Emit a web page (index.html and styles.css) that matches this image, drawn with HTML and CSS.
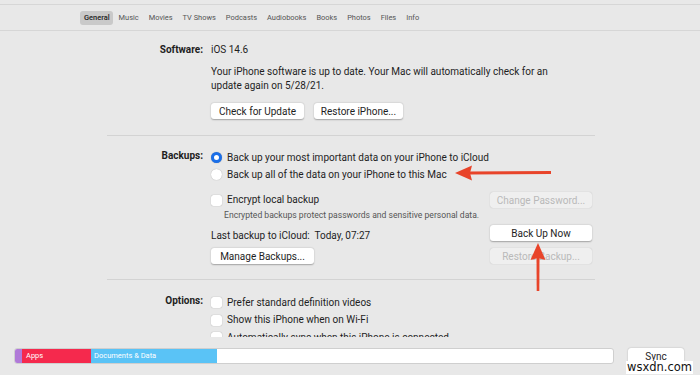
FILE: index.html
```html
<!DOCTYPE html>
<html lang="en">
<head>
    <meta charset="UTF-8">
    <title>iPhone - General</title>
    <link rel="stylesheet" href="styles.css">
</head>
<body>
    <div class="window">
        <!-- Tabs -->
        <div class="tabbar">
            <span class="tab selected">General</span>
            <span class="tab">Music</span>
            <span class="tab">Movies</span>
            <span class="tab">TV Shows</span>
            <span class="tab">Podcasts</span>
            <span class="tab">Audiobooks</span>
            <span class="tab">Books</span>
            <span class="tab">Photos</span>
            <span class="tab">Files</span>
            <span class="tab">Info</span>
        </div>

        <div class="content">
            <!-- Software -->
            <div class="section software">
                <div class="label">Software:</div>
                <div class="body">
                    <div class="version">iOS 14.6</div>
                    <p class="desc">Your iPhone software is up to date. Your Mac will automatically check for an update again on 5/28/21.</p>
                    <div class="buttons">
                        <button class="btn check">Check for Update</button>
                        <button class="btn restore">Restore iPhone...</button>
                    </div>
                </div>
            </div>

            <!-- Backups -->
            <div class="section backups">
                <div class="label">Backups:</div>
                <div class="body">
                    <div class="row radio-row"><span class="radio on"></span>Back up your most important data on your iPhone to iCloud</div>
                    <div class="row radio-row"><span class="radio"></span>Back up all of the data on your iPhone to this Mac</div>
                    <div class="row split encrypt">
                        <span class="check-label"><span class="checkbox"></span>Encrypt local backup</span>
                        <button class="btn wide disabled">Change Password...</button>
                    </div>
                    <div class="note">Encrypted backups protect passwords and sensitive personal data.</div>
                    <div class="row split last">
                        <span>Last backup to iCloud:&nbsp; Today, 07:27</span>
                        <button class="btn wide">Back Up Now</button>
                    </div>
                    <div class="row split manage">
                        <button class="btn manage-btn">Manage Backups...</button>
                        <button class="btn wide disabled">Restore Backup...</button>
                    </div>
                </div>
            </div>

            <!-- Options -->
            <div class="section options">
                <div class="label">Options:</div>
                <div class="body">
                    <div class="row opt"><span class="checkbox"></span>Prefer standard definition videos</div>
                    <div class="row opt"><span class="checkbox"></span>Show this iPhone when on Wi-Fi</div>
                    <div class="row opt"><span class="checkbox"></span>Automatically sync when this iPhone is connected</div>
                </div>
            </div>
        </div>

        <!-- Storage bar -->
        <div class="footer">
            <div class="storage">
                <div class="seg other"></div>
                <div class="seg apps">Apps</div>
                <div class="seg docs">Documents &amp; Data</div>
            </div>
            <div class="sync-wrap">
                <button class="btn sync">Sync</button>
                <span class="watermark">wsxdn.com</span>
            </div>
        </div>

        <!-- red annotation arrows -->
        <svg class="arrow arrow-left" width="100" height="18" viewBox="0 0 100 18">
            <path d="M14 7.5 L96 7 L96 10 L14 10.5 Z" fill="#e8442a"/>
            <path d="M0 9 L17 1.5 L15 9 L17 16.5 Z" fill="#e8442a"/>
        </svg>
        <svg class="arrow arrow-up" width="18" height="50" viewBox="0 0 18 50">
            <path d="M7.5 14 L10.5 14 L10.3 48 L7.7 48 Z" fill="#e8442a"/>
            <path d="M9 0 L16.5 17 L9 15 L1.5 17 Z" fill="#e8442a"/>
        </svg>
    </div>
</body>
</html>
```

FILE: styles.css
```css
* {
    margin: 0;
    padding: 0;
    box-sizing: border-box;
}

body {
    background: #e8e8e8;
    font-family: 'Roboto', 'Liberation Sans', sans-serif;
    font-size: 10px;
    color: #1e1e1e;
}

.window {
    position: relative;
    width: 700px;
    height: 375px;
    overflow: hidden;
}

/* Tabs */
.tabbar {
    margin-top: 4px;
    height: 27px;
    border-top: 1px solid #d6d6d6;
    border-bottom: 1px solid #d6d6d6;
    display: flex;
    align-items: center;
    padding-left: 80px;
    gap: 2px;
    color: #555;
    font-size: 7.45px;
}

.tab {
    padding: 1px 4px;
    line-height: 12px;
    border-radius: 3px;
    white-space: nowrap;
}

.tab.selected {
    background: #c9c9c9;
    color: #222;
    font-weight: 500;
    padding-right: 3px;
}

/* Content */
.content {
    height: 306px;
    overflow: hidden;
}

.section {
    display: grid;
    grid-template-columns: 96px 381px;
    column-gap: 8px;
    margin-left: 107px;
    width: 488px;
}

.label {
    text-align: right;
    font-weight: 700;
    line-height: 14px;
}

.software {
    padding-top: 12px;
    padding-bottom: 16px;
    border-bottom: 1px solid #d3d3d3;
}

.version {
    line-height: 14px;
}

.desc {
    margin-top: 8px;
    line-height: 14px;
    width: 345px;
}

.buttons {
    display: flex;
    gap: 10px;
    margin-top: 10px;
}

.btn {
    font-family: inherit;
    font-size: 10px;
    color: #1e1e1e;
    background: #fff;
    border: none;
    border-radius: 3px;
    height: 16px;
    padding: 0;
    white-space: nowrap;
    box-shadow: 0 0.5px 1.5px rgba(0, 0, 0, 0.3);
}

.btn.check { width: 93px; }
.btn.restore { width: 89px; }
.btn.manage-btn { width: 103px; }
.btn.wide { width: 102px; }

.btn.disabled {
    color: #b9b9b9;
    background: #efefef;
    box-shadow: 0 0 1px rgba(0, 0, 0, 0.25);
}

.backups {
    padding-top: 13px;
    padding-bottom: 15px;
    border-bottom: 1px solid #d3d3d3;
}

.row {
    display: flex;
    align-items: center;
    line-height: 14px;
}

.radio-row {
    height: 17px;
}

.radio {
    width: 11px;
    height: 11px;
    border-radius: 50%;
    background: #fff;
    box-shadow: 0 0 1px rgba(0, 0, 0, 0.35);
    margin-right: 5px;
}

.radio.on {
    background: #fff;
    border: 3.5px solid #1a6ee8;
}

.checkbox {
    width: 11px;
    height: 11px;
    border-radius: 2.5px;
    background: #fff;
    box-shadow: 0 0 1px rgba(0, 0, 0, 0.4);
    margin-right: 5px;
    display: inline-block;
}

.check-label {
    display: flex;
    align-items: center;
}

.split {
    justify-content: space-between;
}

.encrypt {
    margin-top: 9px;
    height: 16px;
}

.note {
    font-size: 8.6px;
    color: #555;
    margin-left: 13px;
    line-height: 14px;
}

.last {
    margin-top: 3px;
    height: 16px;
}

.last span {
    position: relative;
    top: 3px;
}

.manage {
    margin-top: 7px;
    height: 16px;
}

.options {
    padding-top: 14px;
}

.opt {
    height: 17.5px;
}

/* Footer */
.footer {
    display: flex;
    align-items: center;
    padding: 11px 16px 0 14px;
    gap: 14px;
}

.storage {
    width: 600px;
    height: 16px;
    background: #fff;
    border: 1px solid #cfcfcf;
    border-radius: 3px;
    display: flex;
    overflow: hidden;
}

.seg {
    height: 100%;
    color: #fff;
    font-size: 7.5px;
    line-height: 14px;
    padding-left: 3px;
}

.seg.other { width: 7px; background: #b07ad8; padding: 0; }
.seg.apps { width: 69px; background: #f5294d; padding-left: 4px; }
.seg.docs { width: 126px; background: #5ac3f6; }

.sync-wrap {
    position: relative;
}

.btn.sync {
    width: 56px;
}

.watermark {
    position: absolute;
    left: -2px;
    top: 13px;
    background: #fff;
    color: #111;
    font-family: 'DejaVu Sans', sans-serif;
    font-size: 11.5px;
    line-height: 13px;
    padding: 0 1px;
}

/* Annotation arrows */
.arrow {
    position: absolute;
}

.arrow-left {
    left: 455px;
    top: 164px;
}

.arrow-up {
    left: 529px;
    top: 243px;
}
```
